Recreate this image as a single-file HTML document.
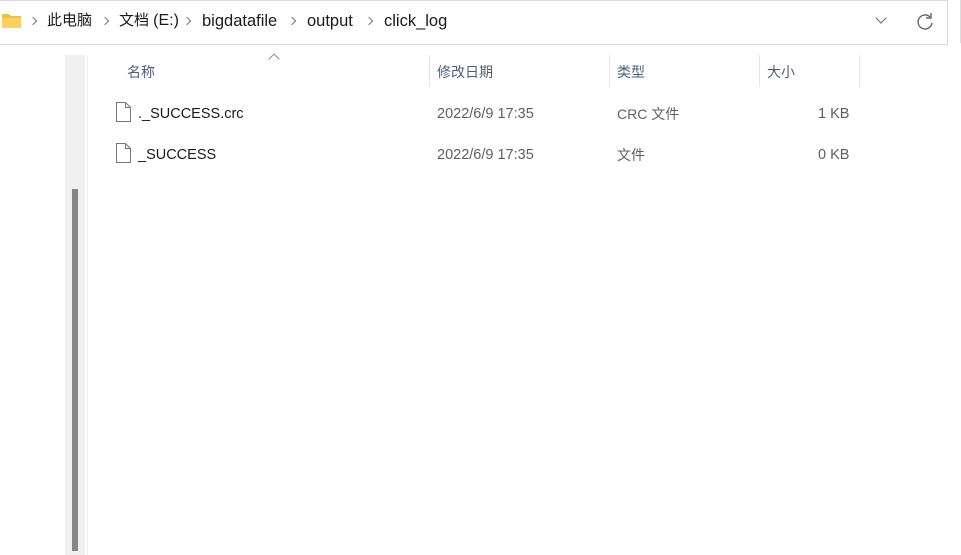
<!DOCTYPE html>
<html><head><meta charset="utf-8"><style>
body{margin:0;width:961px;height:555px;background:#fff;position:relative;overflow:hidden;font-family:"Liberation Sans","Noto Sans CJK SC",sans-serif;color:#1a1a1a}
.a{position:absolute;white-space:nowrap;line-height:20px}
.hd{color:#4c607a;font-size:14px}
.g{color:#5f5f5f;font-size:14px}
.f{font-size:14px;color:#1a1a1a}
.b{font-size:15px;color:#1a1a1a;top:11px}
.bl{font-size:16.5px;color:#1a1a1a;top:11px}
.sep{position:absolute;width:1px;background:#e5e5e5}
.chev{position:absolute;top:18px;width:5px;height:5px;border-right:1.3px solid #777;border-top:1.3px solid #777;transform:rotate(45deg)}
</style></head><body>
<div class="a" style="left:-1px;top:0;width:948px;height:43px;border:1px solid #d9d9d9;border-left:none"></div>
<div class="a" style="left:960px;top:0;width:1px;height:43px;background:#ddd"></div>
<svg class="a" style="left:2px;top:13px" width="20" height="16"><path d="M0 1h7l2 2h10v12H0z" fill="#f2c04a"/><path d="M0 5h19v10H0z" fill="#fcd15e"/></svg>
<div class="chev" style="left:30px"></div>
<div class="a b" style="left:47px">此电脑</div>
<div class="chev" style="left:102px"></div>
<div class="a b" style="left:119px">文档 <span style="font-size:16px">(E:)</span></div>
<div class="chev" style="left:184px"></div>
<div class="a bl" style="left:202px">bigdatafile</div>
<div class="chev" style="left:289px"></div>
<div class="a bl" style="left:307px">output</div>
<div class="chev" style="left:366px"></div>
<div class="a bl" style="left:384px">click_log</div>
<div class="a" style="left:877px;top:14px;width:7px;height:7px;border-right:1.3px solid #666;border-bottom:1.3px solid #666;transform:rotate(45deg)"></div>
<svg class="a" style="left:915px;top:12px" width="20" height="20"><path d="M15 5A7 7 0 1 0 17 11" fill="none" stroke="#666" stroke-width="1.4"/><path d="M11 4h5V-1" fill="none" stroke="#666" stroke-width="1.4" transform="translate(0,2)"/></svg>
<div class="a" style="left:65px;top:55px;width:20px;height:500px;background:#f0f0f0"></div>
<div class="a" style="left:72px;top:189px;width:6px;height:362px;background:#868686"></div>
<div class="a" style="left:87px;top:55px;width:1px;height:500px;background:#f0f0f0"></div>
<div class="a" style="left:270px;top:55px;width:7px;height:7px;border-left:1px solid #888;border-top:1px solid #888;transform:rotate(45deg)"></div>
<div class="a hd" style="left:127px;top:62px">名称</div>
<div class="sep" style="left:429px;top:55px;height:32px"></div>
<div class="a hd" style="left:437px;top:62px">修改日期</div>
<div class="sep" style="left:609px;top:55px;height:32px"></div>
<div class="a hd" style="left:617px;top:62px">类型</div>
<div class="sep" style="left:759px;top:55px;height:32px"></div>
<div class="a hd" style="left:767px;top:62px">大小</div>
<div class="sep" style="left:859px;top:55px;height:32px"></div>
<svg class="a" style="left:115px;top:102px" width="17" height="20"><path d="M1.5 .5h9l5 5v14h-14z M10.5 .5v5h5" fill="#fff" stroke="#777"/></svg>
<div class="a f" style="left:138px;top:104px;font-size:14.5px">._SUCCESS.crc</div>
<div class="a g" style="left:437px;top:104px;font-size:14.5px">2022/6/9 17:35</div>
<div class="a g" style="left:617px;top:104px">CRC 文件</div>
<div class="a g" style="left:818px;top:104px;font-size:14.5px">1 KB</div>
<svg class="a" style="left:115px;top:143px" width="17" height="20"><path d="M1.5 .5h9l5 5v14h-14z M10.5 .5v5h5" fill="#fff" stroke="#777"/></svg>
<div class="a f" style="left:138px;top:145px;font-size:14.5px">_SUCCESS</div>
<div class="a g" style="left:437px;top:145px;font-size:14.5px">2022/6/9 17:35</div>
<div class="a g" style="left:617px;top:145px">文件</div>
<div class="a g" style="left:818px;top:145px;font-size:14.5px">0 KB</div>
</body></html>
